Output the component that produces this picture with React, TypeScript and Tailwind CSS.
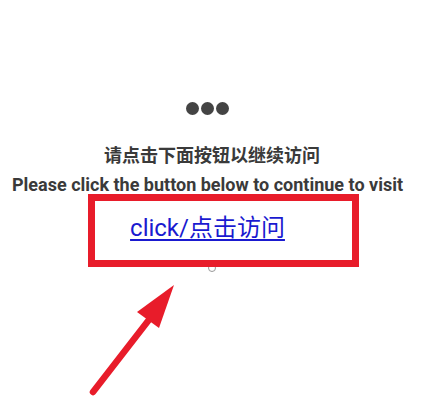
export default function App() {
  return (
    <div
      className="relative w-[424px] h-[408px] bg-white overflow-hidden"
      style={{ fontFamily: 'Roboto, "Noto Sans CJK SC", sans-serif' }}
    >
      <div className="flex flex-col items-center pt-[102px] pr-[9px]">
        <div className="flex gap-[2px]">
          <span className="w-[13px] h-[13px] rounded-full bg-[#444]" />
          <span className="w-[13px] h-[13px] rounded-full bg-[#444]" />
          <span className="w-[13px] h-[13px] rounded-full bg-[#444]" />
        </div>
        <p className="mt-[29px] ml-[9px] text-[18px] leading-[24px] font-bold text-[#3a3a3a]">请点击下面按钮以继续访问</p>
        <p className="mt-[5px] text-[18px] leading-[24px] font-bold text-[#3a3a3a] whitespace-nowrap">
          Please click the button below to continue to visit
        </p>
        <a href="#" className="mt-[16px] text-[24px] leading-[30px] text-[#1a1ad0] underline underline-offset-[3px]">
          click/点击访问
        </a>
        <span className="mt-[21px] ml-[8px] w-[8px] h-[8px] rounded-full border border-[#999]" />
      </div>

      {/* annotation overlay */}
      <div className="absolute left-[88px] top-[194px] w-[271px] h-[73px] border-[7px] border-[#e81c2a]" />
      <svg className="absolute left-0 top-0" width="424" height="408" viewBox="0 0 424 408">
        <line x1="93" y1="392" x2="155" y2="312" stroke="#e81c2a" strokeWidth="6.5" strokeLinecap="round" />
        <polygon points="174,285 137,312 159,328" fill="#e81c2a" />
      </svg>
    </div>
  );
}
